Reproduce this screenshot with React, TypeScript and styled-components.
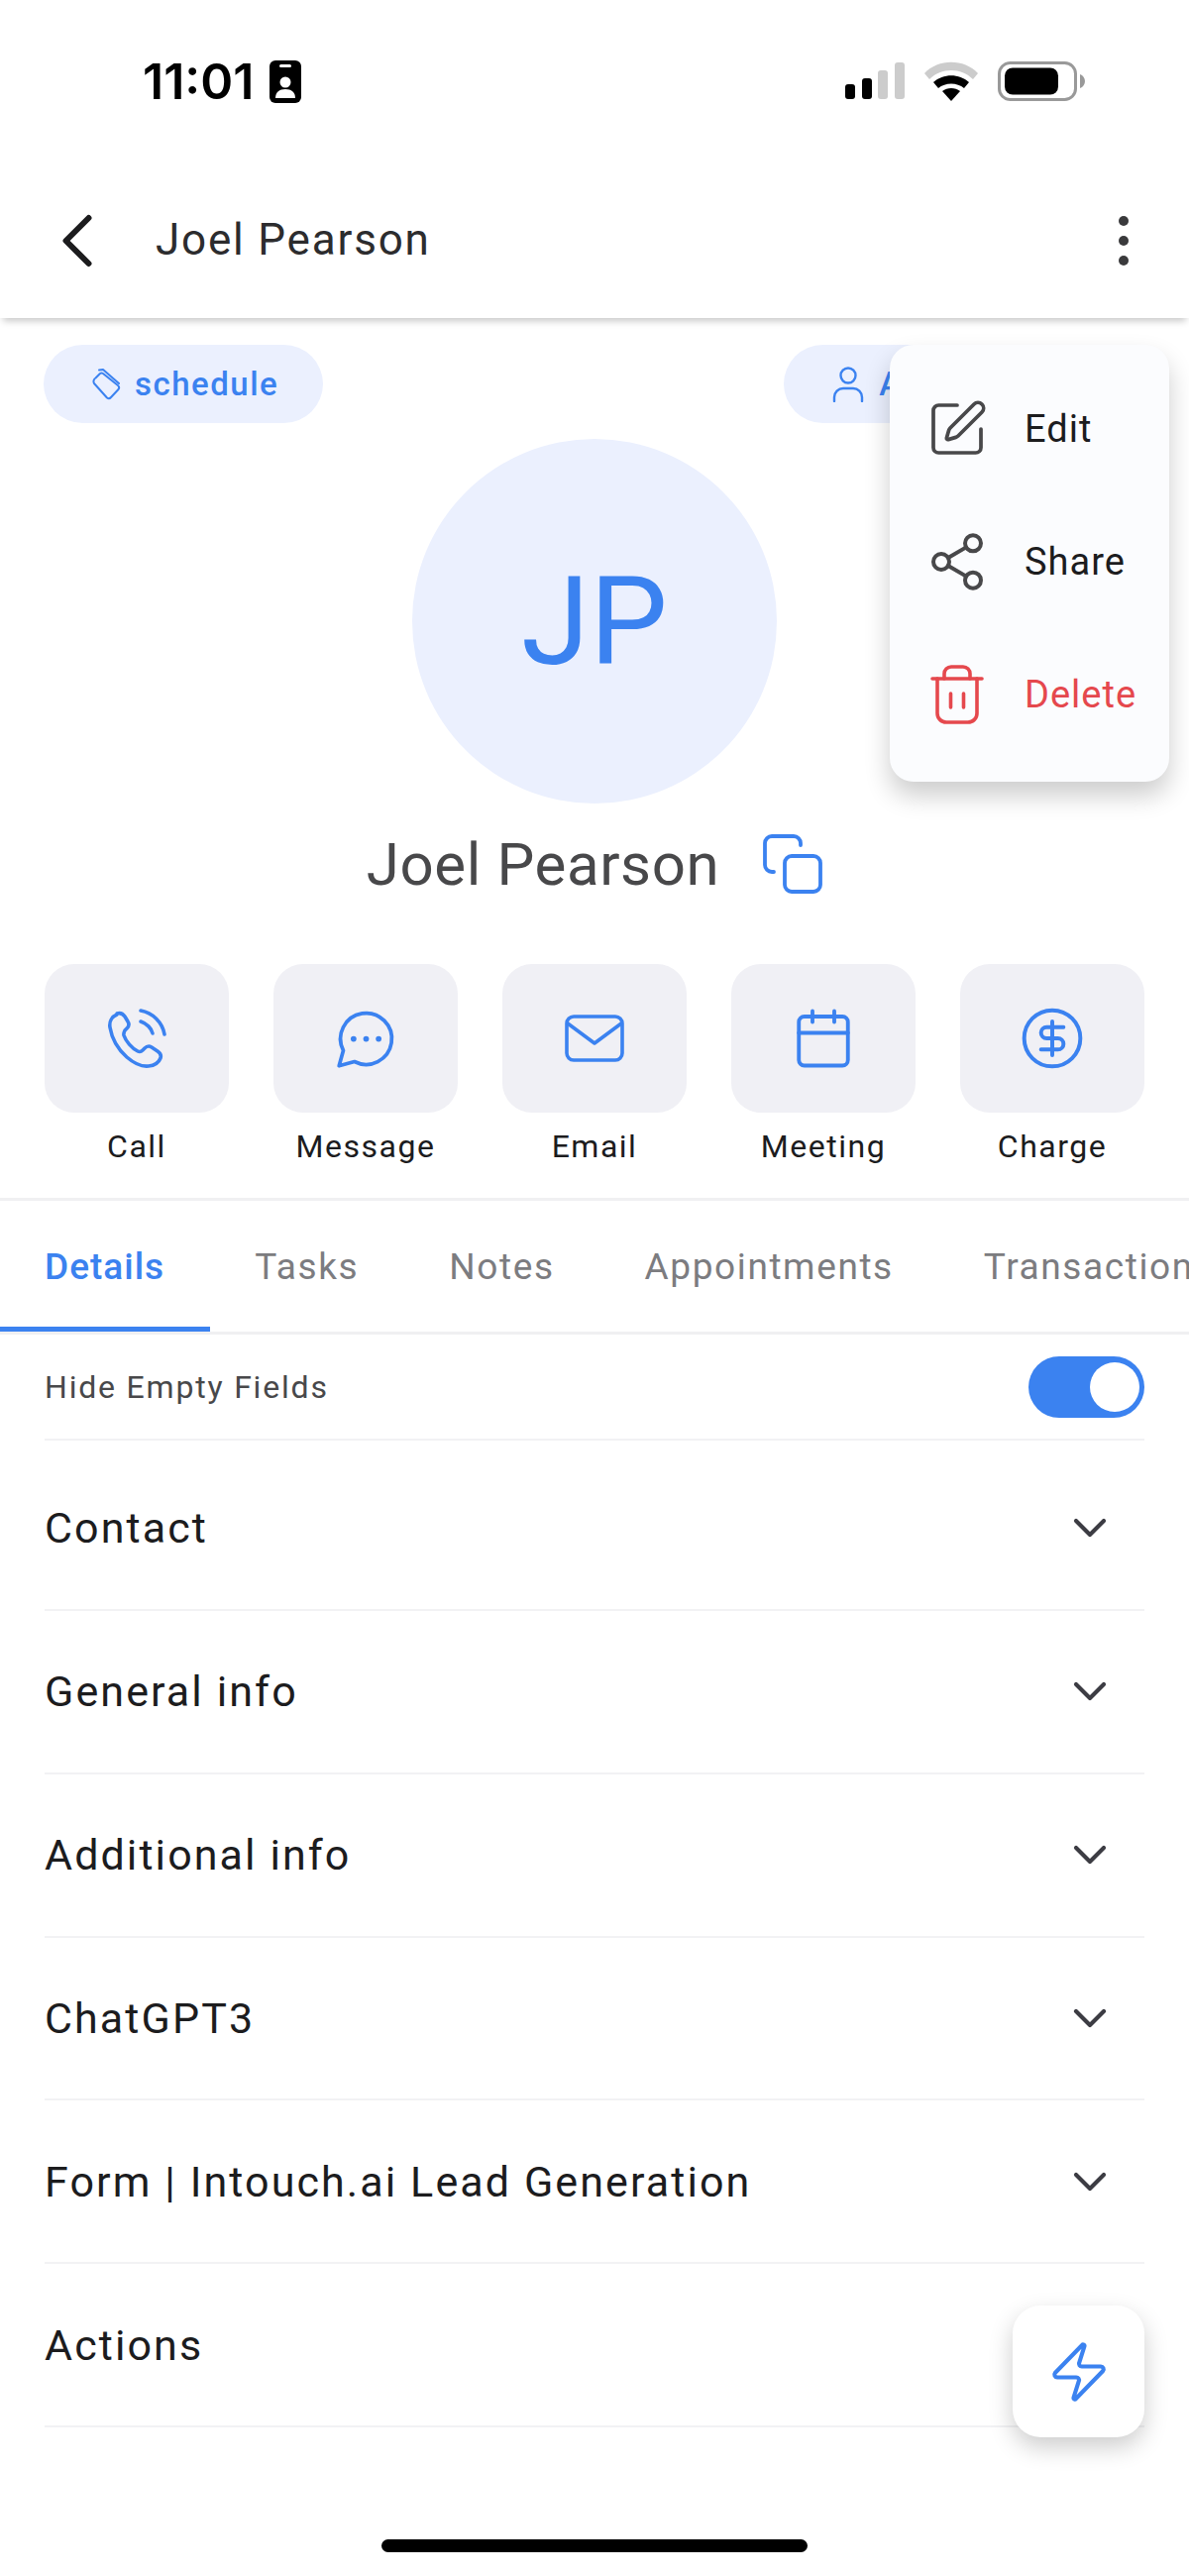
import * as React from "react";
import styled, { createGlobalStyle } from "styled-components";
import { Calendar, ChevronDown, ChevronLeft, CircleDollarSign, Share2, SquarePen, Zap } from "lucide-react";

const BLUE = "#3b82f0";

const sections = ["Contact", "General info", "Additional info", "ChatGPT3", "Form | Intouch.ai Lead Generation", "Actions"];
const tabs = ["Details", "Tasks", "Notes", "Appointments", "Transactions"];

const PhoneIcon = () => (
  <svg width="60" height="60" viewBox="0 0 60 60" fill="none" stroke={BLUE} strokeWidth="3.6" strokeLinecap="round" strokeLinejoin="round">
    <path d="M10 6c-5 2-8 7-7 13 2 12 8 22 17 30 7 6 14 10 22 9 5-.5 10-3 12-8 1-3 0-5-3-7l-6-4c-3-2-5-1-7 1l-2 2c-1 1-3 2-5 1-6-3-12-10-14-16-.5-2 0-3 1-5l2-2c2-2 3-4 1-7l-3-5c-2-3-5-4-8-3z" />
    <path d="M34 13c6 2 11 7 12 12" />
    <path d="M34 2c12 2 22 12 24 24" />
  </svg>
);

const MessageIcon = () => (
  <svg width="69" height="69" viewBox="0 0 24 24" fill="none" stroke={BLUE} strokeWidth="1.3" strokeLinecap="round" strokeLinejoin="round">
    <path d="M7.9 20A9 9 0 1 0 4 16.1L2.5 21.5Z" />
    <circle cx="7.6" cy="12" r="1" fill={BLUE} stroke="none" />
    <circle cx="12" cy="12" r="1" fill={BLUE} stroke="none" />
    <circle cx="16.4" cy="12" r="1" fill={BLUE} stroke="none" />
  </svg>
);

const MailIcon = () => (
  <svg width="60" height="60" viewBox="0 0 60 60" fill="none" stroke={BLUE} strokeWidth="3.6" strokeLinecap="round" strokeLinejoin="round">
    <rect x="2" y="8" width="56" height="44" rx="7" />
    <path d="M3 15l27 20 27-20" />
  </svg>
);

const TrashIcon = () => (
  <svg width="60" height="60" viewBox="0 0 60 60" fill="none" stroke="#e5484d" strokeWidth="3.6" strokeLinecap="round" strokeLinejoin="round">
    <path d="M5 14h50" />
    <path d="M17 14V9a7 7 0 0 1 7-7h12a7 7 0 0 1 7 7v5" />
    <path d="M10 14v35a9 9 0 0 0 9 9h22a9 9 0 0 0 9-9V14" />
    <path d="M23.5 29v14M36.5 29v14" />
  </svg>
);

const CopyIcon = () => (
  <svg width="60" height="60" viewBox="0 0 60 60" fill="none" stroke={BLUE} strokeWidth="3.8" strokeLinecap="round" strokeLinejoin="round">
    <rect x="22" y="22" width="36" height="36" rx="7" />
    <path d="M11 38H9a7 7 0 0 1-7-7V9a7 7 0 0 1 7-7h22a7 7 0 0 1 7 7v2" />
  </svg>
);

const TagIcon = () => (
  <svg width="30" height="32" viewBox="0 0 30 32" fill="none" stroke={BLUE} strokeWidth="2" strokeLinecap="round" strokeLinejoin="round">
    <path d="M4.5 9.5L9 5a3 3 0 0 1 3 0l15 12a3 3 0 0 1 .5 4L20 29a3 3 0 0 1-4 .5L3 15a4 4 0 0 1 1.5-5.500z" />
    <path d="M8 1.500L12 1l16 14" />
  </svg>
);

const UserIcon = () => (
  <svg width="34" height="36" viewBox="0 0 34 36" fill="none" stroke={BLUE} strokeWidth="2.4" strokeLinecap="round" strokeLinejoin="round">
    <circle cx="17" cy="9" r="7.5" />
    <path d="M3 35v-4a9 9 0 0 1 9-9h10a9 9 0 0 1 9 9v4" />
  </svg>
);

const SignalIcon = () => (
  <svg width="60" height="38" viewBox="0 0 60 38">
    <rect x="0" y="22" width="10" height="15" rx="3" fill="#000" />
    <rect x="17" y="16" width="10" height="21" rx="3" fill="#000" />
    <rect x="33" y="8" width="10" height="29" rx="3" fill="#ccc" />
    <rect x="50" y="0" width="10" height="37" rx="3" fill="#ccc" />
  </svg>
);

const WifiIcon = () => (
  <svg width="54" height="40" viewBox="0 0 54 40">
    <path d="M0 12C14 -3 40 -3 54 12l-5 6C37 6 17 6 5 18z" fill="#ccc" />
    <path d="M9 21c10-9 26-9 36 0l-5 6c-7-6-19-6-26 0z" fill="#000" />
    <path d="M18 30c5-4 13-4 18 0l-9 10z" fill="#000" />
  </svg>
);

const BatteryIcon = () => (
  <svg width="88" height="40" viewBox="0 0 88 40">
    <rect x="1.5" y="1.5" width="77" height="37" rx="11" fill="none" stroke="#999" strokeWidth="3" />
    <rect x="7" y="6.5" width="54" height="27" rx="8" fill="#000" />
    <path d="M83 13c3 1 5 4 5 7s-2 6-5 7z" fill="#999" />
  </svg>
);

const BadgeIcon = () => (
  <svg width="32" height="43" viewBox="0 0 32 43">
    <rect x="0" y="0" width="32" height="43" rx="6" fill="#000" />
    <rect x="10" y="4" width="12" height="3" rx="1.5" fill="#fff" />
    <circle cx="16" cy="22" r="5.5" fill="#fff" />
    <path d="M6 38c0-6 4-9 10-9s10 3 10 9z" fill="#fff" />
  </svg>
);

export default function App(): JSX.Element {
  return (
    <Page>
      <GlobalStyle />
      <StatusBar>
        <Clock>
          11:01
          <BadgeIcon />
        </Clock>
        <StatusIcons>
          <SignalIcon />
          <WifiIcon />
          <BatteryIcon />
        </StatusIcons>
      </StatusBar>

      <Header>
        <HeaderLeft>
          <ChevronLeft size={92} strokeWidth={1.55} color="#1c1c1e" />
          <HeaderTitle>Joel Pearson</HeaderTitle>
        </HeaderLeft>
        <Dots>
          <i />
          <i />
          <i />
        </Dots>
      </Header>

      <TagRow>
        <Chip>
          <TagIcon />
          schedule
        </Chip>
        <Chip>
          <UserIcon />
          Assigned
        </Chip>
      </TagRow>

      <Avatar>JP</Avatar>

      <NameRow>
        <Name>Joel Pearson</Name>
        <CopyIcon />
      </NameRow>

      <ActionRow>
        <ActionItem>
          <ActionBox><PhoneIcon /></ActionBox>
          <ActionLabel>Call</ActionLabel>
        </ActionItem>
        <ActionItem>
          <ActionBox><MessageIcon /></ActionBox>
          <ActionLabel>Message</ActionLabel>
        </ActionItem>
        <ActionItem>
          <ActionBox><MailIcon /></ActionBox>
          <ActionLabel>Email</ActionLabel>
        </ActionItem>
        <ActionItem>
          <ActionBox><Calendar size={66} strokeWidth={1.4} /></ActionBox>
          <ActionLabel>Meeting</ActionLabel>
        </ActionItem>
        <ActionItem>
          <ActionBox><CircleDollarSign size={68} strokeWidth={1.4} /></ActionBox>
          <ActionLabel>Charge</ActionLabel>
        </ActionItem>
      </ActionRow>

      <Tabs>
        {tabs.map((t, i) => (
          <TabItem key={t} $active={i === 0}>{t}</TabItem>
        ))}
      </Tabs>

      <Content>
        <ToggleRow>
          <ToggleLabel>Hide Empty Fields</ToggleLabel>
          <Toggle><Knob /></Toggle>
        </ToggleRow>
        {sections.map((s) => (
          <SectionRow key={s}>
            <SectionTitle>{s}</SectionTitle>
            <ChevronDown size={56} strokeWidth={1.8} color="#3c3c43" />
          </SectionRow>
        ))}
      </Content>

      <Menu>
        <MenuItem>
          <MenuIcon><SquarePen size={72} strokeWidth={1.4} color="#48484a" /></MenuIcon>
          <MenuText>Edit</MenuText>
        </MenuItem>
        <MenuItem>
          <MenuIcon><Share2 size={66} strokeWidth={1.5} color="#48484a" /></MenuIcon>
          <MenuText>Share</MenuText>
        </MenuItem>
        <MenuItem>
          <MenuIcon><TrashIcon /></MenuIcon>
          <MenuText $danger>Delete</MenuText>
        </MenuItem>
      </Menu>

      <Fab>
        <Zap size={66} strokeWidth={1.5} />
      </Fab>

      <HomeBar />
    </Page>
  );
}

const GlobalStyle = createGlobalStyle`
  html, body {
    margin: 0;
    padding: 0;
    background: #fff;
  }
`;

const Page = styled.div`
  position: relative;
  width: 1200px;
  height: 2600px;
  overflow: hidden;
  background: #fff;
  font-family: Roboto, "Liberation Sans", sans-serif;
  color: #1c1c1e;
`;

const StatusBar = styled.div`
  display: flex;
  justify-content: space-between;
  align-items: center;
  height: 164px;
  padding: 0 105px 0 144px;
  box-sizing: border-box;
`;

const Clock = styled.div`
  display: flex;
  align-items: center;
  gap: 16px;
  font-family: Inter, sans-serif;
  font-weight: 600;
  font-size: 50px;
  color: #000;
`;

const StatusIcons = styled.div`
  display: flex;
  align-items: center;
  gap: 20px;
`;

const Header = styled.div`
  display: flex;
  justify-content: space-between;
  align-items: center;
  height: 157px;
  padding: 0 61px 0 32px;
  box-sizing: border-box;
  box-shadow: 0 6px 7px -3px rgba(0, 0, 0, 0.22);
`;

const HeaderLeft = styled.div`
  display: flex;
  align-items: center;
  gap: 33px;
`;

const HeaderTitle = styled.div`
  padding-bottom: 2px;
  font-size: 44px;
  letter-spacing: 1.8px;
  color: #2c2c2e;
`;

const Dots = styled.div`
  display: flex;
  flex-direction: column;
  gap: 10px;

  i {
    display: block;
    width: 10px;
    height: 10px;
    border-radius: 50%;
    background: #3a3a3c;
  }
`;

const TagRow = styled.div`
  display: flex;
  gap: 465px;
  padding: 27px 0 0 44px;
  white-space: nowrap;
`;

const Chip = styled.div`
  display: flex;
  align-items: center;
  gap: 14px;
  height: 79px;
  padding: 0 45px 0 48px;
  border-radius: 40px;
  background: #ebf0fe;
  color: ${BLUE};
  font-size: 33px;
  font-weight: 500;
  letter-spacing: 1.5px;
`;

const Avatar = styled.div`
  display: flex;
  align-items: center;
  justify-content: center;
  width: 368px;
  height: 368px;
  margin: 16px auto 0;
  border-radius: 50%;
  background: #ebf0fe;
  color: ${BLUE};
  font-size: 125px;
  font-weight: 400;
`;

const NameRow = styled.div`
  display: flex;
  justify-content: center;
  align-items: center;
  gap: 44px;
  height: 80px;
  margin-top: 21px;
`;

const Name = styled.div`
  font-size: 60px;
  letter-spacing: 0.6px;
  color: #48484a;
`;

const ActionRow = styled.div`
  display: flex;
  justify-content: space-between;
  padding: 61px 45px 0;
  height: 300px;
  box-sizing: border-box;
  border-bottom: 3px solid #f0f0f2;
`;

const ActionItem = styled.div`
  display: flex;
  flex-direction: column;
  align-items: center;
  width: 186px;
`;

const ActionBox = styled.div`
  display: flex;
  align-items: center;
  justify-content: center;
  flex-shrink: 0;
  width: 186px;
  height: 150px;
  border-radius: 30px;
  background: #f0f0f5;
  color: ${BLUE};
`;

const ActionLabel = styled.div`
  margin-top: 15px;
  font-size: 32px;
  letter-spacing: 1.5px;
  color: #1c1c1e;
`;

const Tabs = styled.div`
  display: flex;
  gap: 91px;
  height: 135px;
  padding-left: 45px;
  box-sizing: border-box;
  border-bottom: 3px solid #f0f0f2;
  overflow: hidden;
  white-space: nowrap;
`;

const TabItem = styled.div<{ $active?: boolean }>`
  position: relative;
  display: flex;
  align-items: center;
  font-size: 37px;
  letter-spacing: ${(p) => (p.$active ? "1px" : "1.6px")};
  font-weight: ${(p) => (p.$active ? 500 : 400)};
  color: ${(p) => (p.$active ? BLUE : "#7c7c80")};

  ${(p) =>
    p.$active &&
    `
    &::after {
      content: "";
      position: absolute;
      left: -45px;
      right: -46px;
      bottom: 0;
      height: 5px;
      background: ${BLUE};
    }
  `}
`;

const Content = styled.div`
  padding: 0 45px;
`;

const ToggleRow = styled.div`
  display: flex;
  justify-content: space-between;
  align-items: center;
  height: 107px;
  border-bottom: 2px solid #f2f2f4;
  box-sizing: border-box;
`;

const ToggleLabel = styled.div`
  font-size: 32px;
  letter-spacing: 1.8px;
  color: #48484a;
`;

const Toggle = styled.div`
  display: flex;
  justify-content: flex-end;
  align-items: center;
  width: 117px;
  height: 62px;
  padding-right: 5px;
  box-sizing: border-box;
  border-radius: 31px;
  background: ${BLUE};
`;

const Knob = styled.div`
  width: 50px;
  height: 50px;
  border-radius: 50%;
  background: #fff;
`;

const SectionRow = styled.div`
  display: flex;
  justify-content: space-between;
  align-items: center;
  height: 164.8px;
  padding-right: 27px;
  border-bottom: 2px solid #f2f2f4;
  box-sizing: border-box;

  ${ToggleRow} + & {
    height: 172px;
    padding-top: 6px;
  }
`;

const SectionTitle = styled.div`
  font-size: 43px;
  letter-spacing: 2.1px;
  color: #1c1c1e;
`;

const Menu = styled.div`
  position: absolute;
  top: 348px;
  left: 898px;
  width: 282px;
  height: 441px;
  display: flex;
  flex-direction: column;
  justify-content: center;
  gap: 64px;
  padding: 0 0 3px 36px;
  box-sizing: border-box;
  border-radius: 24px;
  background: #fbfcfe;
  box-shadow: 0 14px 26px rgba(0, 0, 0, 0.2);
`;

const MenuItem = styled.div`
  display: flex;
  align-items: center;
  gap: 36px;
  height: 70px;
`;

const MenuIcon = styled.div`
  display: flex;
  align-items: center;
  justify-content: center;
  width: 64px;
`;

const MenuText = styled.div<{ $danger?: boolean }>`
  font-size: 38px;
  letter-spacing: 1px;
  color: ${(p) => (p.$danger ? "#e5484d" : "#1c1c1e")};
`;

const Fab = styled.div`
  position: absolute;
  top: 2327px;
  left: 1022px;
  width: 133px;
  height: 133px;
  display: flex;
  align-items: center;
  justify-content: center;
  border-radius: 28px;
  background: #fff;
  color: ${BLUE};
  box-shadow: 0 10px 24px rgba(0, 0, 0, 0.2);
`;

const HomeBar = styled.div`
  position: absolute;
  left: 385px;
  bottom: 24px;
  width: 430px;
  height: 13px;
  border-radius: 7px;
  background: #000;
`;
